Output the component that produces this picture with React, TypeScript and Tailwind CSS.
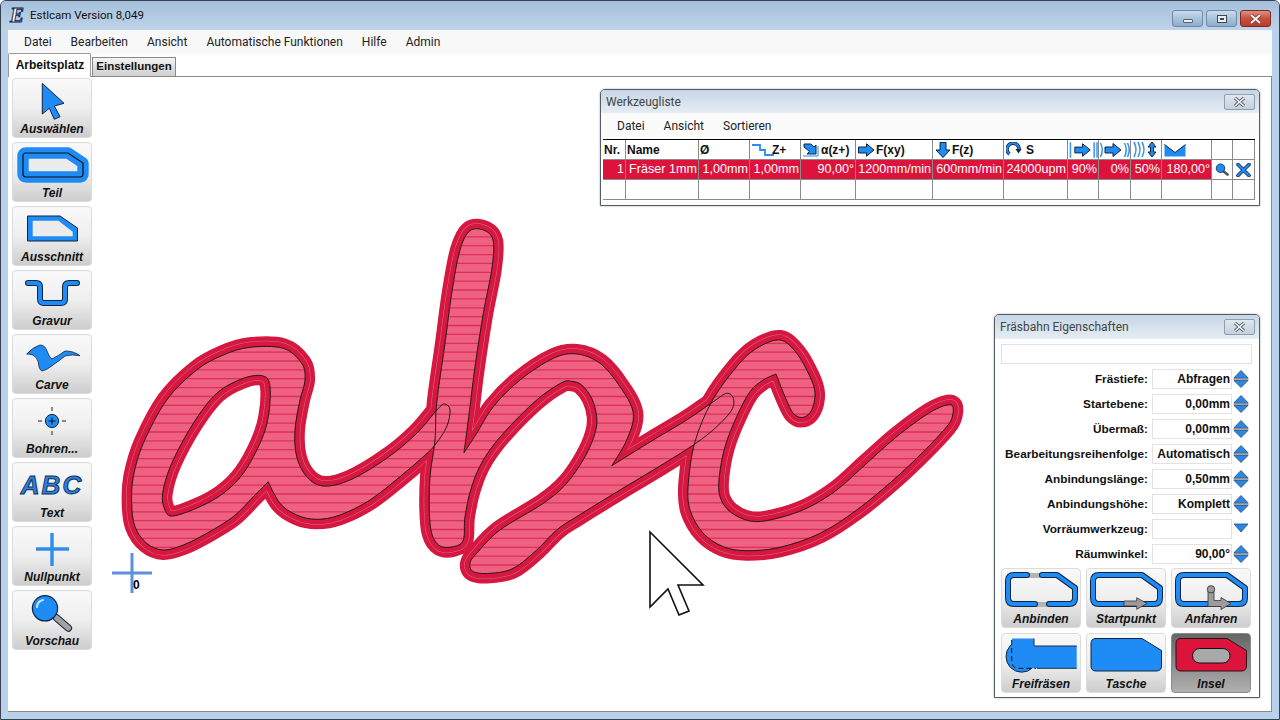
import React from "react";

const BLUE = "#1f8bf5";
const DARK = "#0f2540";

// outline tracing helper: points are read from zoomed crops (3x), third value marks a sharp corner
function trace(ox: number, oy: number, pts: number[][]) {
  const p = pts.map((q) => [ox + q[0] / 3, oy + q[1] / 3, q[2] || 0]);
  const n = p.length;
  let d = `M${p[0][0].toFixed(1)} ${p[0][1].toFixed(1)}`;
  for (let i = 0; i < n; i++) {
    const p0 = p[(i - 1 + n) % n];
    const p1 = p[i];
    const p2 = p[(i + 1) % n];
    const p3 = p[(i + 2) % n];
    const k1 = p1[2] ? 0 : 1 / 6;
    const k2 = p2[2] ? 0 : 1 / 6;
    const c1x = p1[0] + (p2[0] - p0[0]) * k1;
    const c1y = p1[1] + (p2[1] - p0[1]) * k1;
    const c2x = p2[0] - (p3[0] - p1[0]) * k2;
    const c2y = p2[1] - (p3[1] - p1[1]) * k2;
    d += `C${c1x.toFixed(1)} ${c1y.toFixed(1)} ${c2x.toFixed(1)} ${c2y.toFixed(1)} ${p2[0].toFixed(1)} ${p2[1].toFixed(1)}`;
  }
  return d + "Z";
}

const shapeA = trace(110, 330, [
  [420, 52], [520, 55], [575, 100], [585, 150], [570, 210], [555, 300], [560, 380], [590, 440], [640, 468], [720, 450],
  [830, 385], [920, 310], [985, 235], [1005, 222], [1020, 240], [1010, 290], [975, 345], [940, 380], [870, 440], [780, 510],
  [690, 555], [620, 568], [560, 555], [510, 520], [475, 455, 1], [430, 500], [370, 560], [290, 610], [220, 645], [160, 660],
  [110, 640], [75, 590], [65, 520], [70, 440], [100, 340], [170, 210], [260, 120], [340, 75],
]);
const holeA = trace(110, 330, [
  [460, 138], [400, 145], [320, 190], [250, 280], [185, 400], [158, 490], [165, 540], [190, 558], [270, 530], [340, 490],
  [400, 430], [450, 340], [475, 260], [480, 170],
]);
const shapeB = trace(420, 210, [
  [45, 690], [50, 580], [75, 400], [95, 250], [120, 120], [150, 62], [195, 62], [220, 95], [215, 180], [190, 310],
  [165, 470], [150, 590], [132, 728, 1], [170, 670], [220, 590], [300, 510], [400, 445], [470, 432], [540, 460], [600, 530],
  [640, 610], [620, 690], [575, 767, 1], [700, 690], [800, 630], [880, 575], [920, 550], [940, 565], [935, 600], [890, 650],
  [820, 705], [700, 780], [600, 840], [470, 920], [410, 960], [350, 1020], [280, 1075], [210, 1090], [160, 1085], [150, 1060],
  [170, 1030], [240, 960], [370, 880], [440, 820], [495, 740], [525, 670], [530, 620], [515, 565], [485, 525], [455, 514], [425, 518],
  [350, 570], [250, 670], [190, 750], [155, 830], [135, 920], [130, 990], [100, 1010], [60, 1008], [35, 970], [28, 900], [30, 800],
]);
const shapeC = trace(640, 320, [
  [420, 60], [470, 100], [510, 170], [525, 220], [515, 270], [490, 292], [460, 280], [435, 230], [408, 162, 1], [370, 180],
  [330, 215], [290, 290], [255, 380], [238, 470], [240, 530], [270, 575], [330, 603], [400, 598], [500, 565], [590, 510],
  [680, 430], [770, 350], [850, 290], [900, 262], [935, 255], [938, 285], [920, 320], [850, 395], [760, 480], [650, 570],
  [540, 640], [420, 682], [320, 692], [250, 680], [190, 640], [150, 570], [145, 490], [165, 365], [215, 245], [290, 140], [350, 85],
]);
const contour = shapeA + holeA + shapeB + shapeC;

let hatch = "";
for (let k = -16; k < 28; k++) {
  const y = 361 + k * 8.87;
  hatch += `M100 ${y.toFixed(1)}H1000`;
}

const Toolpath = () => (
  <svg className="absolute left-0 top-0 h-[634px] w-[1264px]" viewBox="8 77 1264 634" fill="none">
    <defs>
      <clipPath id="inside">
        <path d={contour} />
      </clipPath>
    </defs>
    <path d={contour} stroke="#d6173f" strokeWidth="20" strokeLinejoin="round" />
    <path d={contour} stroke="#d4708a" strokeWidth="11" strokeLinejoin="round" />
    <path d={contour} stroke="#d6173f" strokeWidth="10" strokeLinejoin="round" />
    <path d={contour} fill="#ee6181" />
    <path d={hatch} stroke="#dc3059" strokeWidth="1.3" clipPath="url(#inside)" />
    <path d={contour} stroke="#111" strokeWidth="0.9" />
    <path d="M650 532L703 585H678L689 611L679 615L668 589L650 607Z" fill="#fff" stroke="#111" strokeWidth="1.6" />
    <path d="M112 573H152M132 553V593" stroke="#5f8fdc" strokeWidth="3" />
  </svg>
);

const Band = ({ d }: { d: string }) => (
  <>
    <path d={d} fill="none" stroke={DARK} strokeWidth="6" strokeLinecap="round" strokeLinejoin="round" />
    <path d={d} fill="none" stroke={BLUE} strokeWidth="4" strokeLinecap="round" strokeLinejoin="round" />
  </>
);

const OUTLINE = "M13 7H56L74 20V30Q74 36 68 36H13Q7 36 7 30V13Q7 7 13 7Z";
const PLATE = "M10 5.5H56L75.5 17.5V33Q75.5 38 70 38H10Q5 38 5 33V10.5Q5 5.5 10 5.5Z";
const TEIL = "M14 11H56L71 21V32Q71 35 68 35H14Q11 35 11 32V14Q11 11 14 11Z";

const icons: Record<string, React.ReactNode> = {
  arrow: (
    <path d="M30.3 5.3L52 25.3L42.3 28L48 38.7L42.3 41.3L37.3 30.3L30.3 36Z" fill={BLUE} stroke={DARK} strokeWidth="1" strokeLinejoin="round" />
  ),
  teil: (
    <>
      <path d={TEIL} fill="#ececec" stroke={BLUE} strokeWidth="11.4" strokeLinejoin="round" />
      <path d={TEIL} fill="none" stroke="#111" strokeWidth="1.2" />
    </>
  ),
  ausschnitt: (
    <>
      <path d="M15.5 10H48L65.5 22V35H15.5Z" fill={BLUE} stroke={DARK} strokeWidth="1" />
      <path d="M20.7 14.7H46.5L60.7 25.7V30.3H20.7Z" fill="#ececec" />
    </>
  ),
  gravur: <Band d="M16 13H24Q28 13 28 17V29Q28 33 32 33H49Q53 33 53 29V17Q53 13 57 13H65" />,
  carve: (
    <path d="M14.7 20Q21 13 28 11Q33 11 35 17Q37 23 40 25Q46 22 53 17Q62 17 68 21.7Q60 20 53 22Q47 27 41 31Q35 36 30 37Q27 36 26.3 28Q25 23 21 21Q18 20 14.7 20Z" fill={BLUE} stroke={DARK} strokeWidth="0.8" />
  ),
  bohren: (
    <>
      <path d="M26 23H30M50 23H54M40 9V13M40 33V37" stroke="#222" strokeWidth="1" />
      <circle cx="40" cy="23" r="6.6" fill={BLUE} stroke={DARK} strokeWidth="1" />
      <path d="M36.5 23H43.5M40 19.5V26.5" stroke="#111" strokeWidth="1" />
    </>
  ),
  null: <path d="M40 7V40M24 23H57" stroke="#2f8de8" strokeWidth="3.4" />,
  vorschau: (
    <>
      <path d="M44.7 28L56.3 38" stroke={DARK} strokeWidth="7.5" strokeLinecap="round" />
      <path d="M44.7 28L56.3 38" stroke="#a2a2a2" strokeWidth="5.5" strokeLinecap="round" />
      <circle cx="33" cy="18.3" r="12.6" fill={BLUE} stroke={DARK} strokeWidth="1.2" />
      <path d="M25 17Q25.5 11 31 10" stroke="#cfe6ff" strokeWidth="2" fill="none" strokeLinecap="round" />
    </>
  ),
  anbinden: (
    <>
      <rect x="28" y="5" width="11" height="5" fill="#b4b4b4" />
      <rect x="35" y="34" width="11" height="5" fill="#b4b4b4" />
      <Band d="M26 7H13Q7 7 7 13V30Q7 36 13 36H34" />
      <Band d="M41 7H56L74 20V30Q74 36 68 36H48" />
    </>
  ),
  startpunkt: (
    <>
      <Band d={OUTLINE} />
      <path d="M38 33H50.7V29.7L61 35.5L50.7 41.3V38H38Z" fill="#9c9c9c" stroke="#333" strokeWidth="0.8" />
    </>
  ),
  anfahren: (
    <>
      <Band d={OUTLINE} />
      <path d="M37 22V38.5H50V41.5L60 35.5L50 29.5V32.5H43V22Z" fill="#9c9c9c" stroke="#333" strokeWidth="0.8" />
      <circle cx="40" cy="21.3" r="3.7" fill="#9c9c9c" stroke="#333" strokeWidth="0.8" />
    </>
  ),
  frei: (
    <>
      <circle cx="20.7" cy="23.5" r="15.7" fill={BLUE} stroke={DARK} strokeWidth="1" />
      <path d="M11 5.5H33V13H75.7V35.3H30V30H11Z" fill={BLUE} />
      <path d="M33 5.5V13H75.7M75.7 35.3H36" stroke="#16304f" strokeWidth="1" fill="none" />
      <path d="M10.7 7V28Q11 35 17 35.3H35" stroke="#111" strokeWidth="1" strokeDasharray="5 3" fill="none" />
    </>
  ),
  tasche: <path d={PLATE} fill={BLUE} stroke={DARK} strokeWidth="1" />,
  insel: (
    <>
      <path d={PLATE} fill="#dc143c" stroke="#2a1015" strokeWidth="1" />
      <rect x="21.5" y="15.5" width="37.5" height="14.5" rx="7.2" fill="#a9a9a9" stroke="#111" strokeWidth="1" />
    </>
  ),
};

const ToolButton = ({ label, icon, pressed, children }: { label: string; icon?: string; pressed?: boolean; children?: React.ReactNode }) => (
  <div
    className={
      pressed
        ? "flex h-[60px] w-20 flex-col items-center rounded-[4px] border border-[#8a8a8a] bg-linear-to-b from-[#666666] to-[#b0b0b0]"
        : "flex h-[60px] w-20 flex-col items-center rounded-[4px] border border-[#dcdcdc] bg-linear-to-b from-[#f9f9f9] via-[#efefef] to-[#cdcdcd]"
    }
  >
    {icon ? (
      <svg className="h-[43px] w-[78px] shrink-0 overflow-visible" viewBox="1 1 78 43">
        {icons[icon]}
      </svg>
    ) : (
      <div className="flex h-[43px] shrink-0 items-center">{children}</div>
    )}
    <span className="text-xs font-bold italic leading-[14px] text-[#111]">{label}</span>
  </div>
);

const Sidebar = () => (
  <div className="relative z-10 flex w-[84px] flex-col gap-1 pl-1 pt-px">
    <ToolButton label="Auswählen" icon="arrow" />
    <ToolButton label="Teil" icon="teil" />
    <ToolButton label="Ausschnitt" icon="ausschnitt" />
    <ToolButton label="Gravur" icon="gravur" />
    <ToolButton label="Carve" icon="carve" />
    <ToolButton label="Bohren..." icon="bohren" />
    <ToolButton label="Text">
      <span className="text-[26px] font-bold italic leading-none tracking-[2px] text-[#2a82e4] [-webkit-text-stroke:1px_#12305a]">ABC</span>
    </ToolButton>
    <ToolButton label="Nullpunkt" icon="null" />
    <ToolButton label="Vorschau" icon="vorschau" />
  </div>
);

const CloseButton = () => (
  <div className="flex h-[16px] w-[31px] items-center justify-center rounded-[2px] border border-[#8f9eae] bg-linear-to-b from-[#dfe7ef] to-[#c3d0dd]">
    <svg width="13" height="10" viewBox="0 0 13 10">
      <path d="M2 1L11 9M11 1L2 9" stroke="#4d5863" strokeWidth="3.2" />
      <path d="M2 1L11 9M11 1L2 9" stroke="#f4f6f8" strokeWidth="1.6" />
    </svg>
  </div>
);

const Arrow = () => (
  <svg width="17" height="14" viewBox="0 0 17 14" className="shrink-0">
    <path d="M0.5 4H8.5V0.8L16 7L8.5 13.2V10H0.5Z" fill={BLUE} stroke={DARK} strokeWidth="1" />
  </svg>
);

const Head = ({ children, className = "" }: { children: React.ReactNode; className?: string }) => (
  <div className={"flex h-5 items-center overflow-hidden border-b border-r border-[#8a8a8a] text-xs font-bold text-[#111] " + className}>{children}</div>
);

const Cell = ({ children, className = "" }: { children?: React.ReactNode; className?: string }) => (
  <div className={"flex h-5 items-center justify-end overflow-hidden whitespace-nowrap border-b border-r border-[#8a8a8a] bg-[#dc143c] pr-px text-[12.6px] text-white " + className}>{children}</div>
);

const ToolList = () => (
  <div className="absolute left-[592px] top-3 z-20 flex h-[117px] w-[660px] flex-col rounded-t-[5px] border border-[#555c63] bg-white shadow-[0_0_2px_#0006]">
    <div className="flex h-[23px] shrink-0 items-center justify-between rounded-t-[4px] bg-linear-to-b from-[#c6d6e6] to-[#e6edf3] pl-[5px] pr-[4px] font-['Roboto',sans-serif] text-xs text-[#444]">
      <span>Werkzeugliste</span>
      <CloseButton />
    </div>
    <div className="flex h-[26px] shrink-0 items-center gap-[19px] bg-[#fbfbfb] pl-4 font-['Roboto',sans-serif] text-xs text-[#222]">
      <span>Datei</span>
      <span>Ansicht</span>
      <span>Sortieren</span>
    </div>
    <div className="ml-0.5 grid w-[652px] grid-cols-[23px_73px_51px_51px_55px_77px_71px_64px_31px_32px_31px_50px_21px_22px] border-t border-black">
      <Head className="pl-px">Nr.</Head>
      <Head className="pl-px">Name</Head>
      <Head className="pl-px">Ø</Head>
      <Head className="gap-1 pl-0.5">
        <svg width="26" height="14" viewBox="0 0 26 14" className="shrink-0">
          <path d="M0 2H8V7H13V12H22" fill="none" stroke="#2f8de8" strokeWidth="1.8" />
        </svg>
        <span className="-ml-2.5">Z+</span>
      </Head>
      <Head className="gap-px pl-0.5">
        <svg width="17" height="14" viewBox="0 0 17 14" className="shrink-0">
          <path d="M1 1H8L11 4L13 2V11H4L6.5 8.5L1 4Z" fill={BLUE} stroke={DARK} strokeWidth="1" />
          <path d="M0 13H15V3" fill="none" stroke={BLUE} strokeWidth="1" />
        </svg>
        α(z+)
      </Head>
      <Head className="gap-px pl-0.5">
        <Arrow />
        F(xy)
      </Head>
      <Head className="gap-px pl-0.5">
        <svg width="16" height="16" viewBox="0 0 16 16" className="shrink-0">
          <path d="M5 0.5H11V8H15L8 15.5L1 8H5Z" fill={BLUE} stroke={DARK} strokeWidth="1" />
        </svg>
        F(z)
      </Head>
      <Head className="gap-1 pl-0.5">
        <svg width="16" height="15" viewBox="0 0 16 15" className="shrink-0">
          <path d="M3.5 12A6 6 0 1 1 13 8" fill="none" stroke={DARK} strokeWidth="3.6" />
          <path d="M3.5 12A6 6 0 1 1 13 8" fill="none" stroke={BLUE} strokeWidth="2" />
          <path d="M9.5 7H15.5L12.5 11.5Z" fill={DARK} />
        </svg>
        S
      </Head>
      <Head className="pl-px">
        <svg width="30" height="16" viewBox="0 0 30 16">
          <path d="M1.5 0V16M26 0V16M29 0V16" stroke="#3b97ee" strokeWidth="1.6" />
          <path d="M6 5H14V1.5L22 8L14 14.5V11H6Z" fill={BLUE} stroke={DARK} strokeWidth="1" />
        </svg>
      </Head>
      <Head>
        <svg width="31" height="16" viewBox="0 0 31 16">
          <path d="M1.5 1Q5 8 1.5 15M25.5 1Q29 8 25.5 15M28.5 1Q32 8 28.5 15" fill="none" stroke="#3b97ee" strokeWidth="1.6" />
          <path d="M6 5H14V1.5L22 8L14 14.5V11H6Z" fill={BLUE} stroke={DARK} strokeWidth="1" />
        </svg>
      </Head>
      <Head className="pl-0.5">
        <svg width="27" height="17" viewBox="0 0 27 17">
          <path d="M1 1Q5 8.5 1 16M5 1Q9 8.5 5 16M9 1Q13 8.5 9 16" fill="none" stroke="#3b97ee" strokeWidth="1.6" />
          <path d="M19 1L23 6H20.5V11H23L19 16L15 11H17.5V6H15Z" fill={BLUE} stroke={DARK} strokeWidth="1" />
        </svg>
      </Head>
      <Head className="pl-0.5">
        <svg width="22" height="14" viewBox="0 0 22 14">
          <path d="M0.5 1.5L11 9.5L21.5 1.5V13.5H0.5Z" fill={BLUE} />
          <path d="M0.5 1.5L11 9.5L21.5 1.5" fill="none" stroke={DARK} strokeWidth="1" />
        </svg>
      </Head>
      <Head>{null}</Head>
      <Head>{null}</Head>

      <Cell>1</Cell>
      <Cell className="justify-start pl-[3px]">Fräser 1mm</Cell>
      <Cell>1,00mm</Cell>
      <Cell>1,00mm</Cell>
      <Cell>90,00°</Cell>
      <Cell>1200mm/min</Cell>
      <Cell>600mm/min</Cell>
      <Cell>24000upm</Cell>
      <Cell className="pr-[3px]">90%</Cell>
      <Cell>0%</Cell>
      <Cell>50%</Cell>
      <Cell>180,00°</Cell>
      <div className="flex h-5 items-center justify-center border-b border-r border-[#8a8a8a]">
        <svg width="14" height="13" viewBox="0 0 14 13">
          <path d="M8 8L12.5 11.5" stroke="#555" strokeWidth="2.8" strokeLinecap="round" />
          <circle cx="5.5" cy="5.2" r="4.3" fill={BLUE} stroke={DARK} strokeWidth="0.8" />
        </svg>
      </div>
      <div className="flex h-5 items-center justify-center border-b border-r border-[#8a8a8a]">
        <svg width="15" height="14" viewBox="0 0 15 14">
          <path d="M2 1.5L13 12.5M13 1.5L2 12.5" stroke={DARK} strokeWidth="3.6" strokeLinecap="round" />
          <path d="M2 1.5L13 12.5M13 1.5L2 12.5" stroke={BLUE} strokeWidth="2.2" strokeLinecap="round" />
        </svg>
      </div>

      {Array.from({ length: 14 }).map((_, i) => (
        <div key={i} className="h-5 border-b border-r border-[#8a8a8a] bg-white" />
      ))}
    </div>
  </div>
);

const Spinner = ({ downOnly }: { downOnly?: boolean }) => (
  <svg width="16" height="20" viewBox="0 0 16 20" className="shrink-0">
    {downOnly ? (
      <path d="M1 5H15L8 13Z" fill="#2f86e0" stroke="#1c4f8a" strokeWidth="0.8" />
    ) : (
      <>
        <path d="M8 1.5L15 8.8H1Z" fill="#2f86e0" stroke="#1c4f8a" strokeWidth="0.8" />
        <path d="M0.5 10H15.5" stroke="#223" strokeWidth="0.8" />
        <path d="M1 11.5H15L8 18.5Z" fill="#2f86e0" stroke="#1c4f8a" strokeWidth="0.8" />
      </>
    )}
  </svg>
);

const Field = ({ label, value, downOnly }: { label: string; value: string; downOnly?: boolean }) => (
  <div className="flex h-5 items-center">
    <span className="w-[153px] whitespace-nowrap pt-px text-right text-[11.8px] font-bold text-[#111]">{label}</span>
    <div className="ml-1 flex h-5 w-20 items-center justify-end border border-[#e2e2e2] pr-px text-xs font-bold text-[#111]">{value}</div>
    <div className="ml-px">
      <Spinner downOnly={downOnly} />
    </div>
  </div>
);

const PathProps = () => (
  <div className="absolute left-[986px] top-[237px] z-20 flex h-[384px] w-[266px] flex-col rounded-t-[5px] border border-[#555c63] bg-white shadow-[0_0_2px_#0006]">
    <div className="flex h-6 shrink-0 items-center justify-between rounded-t-[4px] bg-linear-to-b from-[#c6d6e6] to-[#e6edf3] pl-[5px] pr-[4px] font-['Roboto',sans-serif] text-xs text-[#444]">
      <span>Fräsbahn Eigenschaften</span>
      <CloseButton />
    </div>
    <div className="ml-1.5 mt-[5px] h-5 w-[251px] shrink-0 border border-[#e2e2e2]" />
    <div className="mt-[5px] flex flex-col gap-[5px]">
      <Field label="Frästiefe:" value="Abfragen" />
      <Field label="Startebene:" value="0,00mm" />
      <Field label="Übermaß:" value="0,00mm" />
      <Field label="Bearbeitungsreihenfolge:" value="Automatisch" />
      <Field label="Anbindungslänge:" value="0,50mm" />
      <Field label="Anbindungshöhe:" value="Komplett" />
      <Field label="Vorräumwerkzeug:" value="" downOnly />
      <Field label="Räumwinkel:" value="90,00°" />
    </div>
    <div className="ml-1.5 mt-1 grid grid-cols-[80px_80px_80px] gap-[5px]">
      <ToolButton label="Anbinden" icon="anbinden" />
      <ToolButton label="Startpunkt" icon="startpunkt" />
      <ToolButton label="Anfahren" icon="anfahren" />
      <ToolButton label="Freifräsen" icon="frei" />
      <ToolButton label="Tasche" icon="tasche" />
      <ToolButton label="Insel" icon="insel" pressed />
    </div>
  </div>
);

const WindowControls = () => (
  <div className="flex items-start gap-[3px] pr-2 pt-[9px]">
    <div className="flex h-[17px] w-[31px] items-center justify-center rounded-[3px] border border-[#6f8aa6] bg-linear-to-b from-[#c9dbec] via-[#aac3dc] to-[#8dabc9]">
      <div className="mt-1 h-1 w-2.5 rounded-[1px] border border-[#56626e] bg-[#e9eef3]" />
    </div>
    <div className="flex h-[17px] w-[31px] items-center justify-center rounded-[3px] border border-[#6f8aa6] bg-linear-to-b from-[#c9dbec] via-[#aac3dc] to-[#8dabc9]">
      <div className="flex h-2 w-2.5 items-center justify-center border border-[#3d4955] bg-[#e9eef3]">
        <div className="h-0.5 w-1 bg-[#3d4955]" />
      </div>
    </div>
    <div className="flex h-[17px] w-[31px] items-center justify-center rounded-[3px] border border-[#7a2a22] bg-linear-to-b from-[#dd8f82] via-[#c5513f] to-[#c03a2a]">
      <svg width="13" height="10" viewBox="0 0 13 10">
        <path d="M2 1L11 9M11 1L2 9" stroke="#6b3a34" strokeWidth="3.4" />
        <path d="M2 1L11 9M11 1L2 9" stroke="#f7f2f0" strokeWidth="2" />
      </svg>
    </div>
  </div>
);

export default function App() {
  return (
    <div className="flex h-[720px] w-[1280px] flex-col overflow-hidden rounded-t-[6px] border border-[#39424c] bg-[#b9d1ea] px-[7px] pb-[7px] font-['Liberation_Sans',Arial,sans-serif]">
      <div className="-mx-[7px] flex h-[29px] shrink-0 justify-between bg-linear-to-b from-[#a5c0dc] to-[#bed3e9] pl-[9px]">
        <div className="flex items-center gap-1 font-['Roboto',sans-serif] text-[11.5px] text-[#111]">
          <span className="w-4 font-['Liberation_Serif',serif] text-[21px] font-bold italic leading-none text-white [-webkit-text-stroke:1px_#14264f]">E</span>
          <span>Estlcam Version 8,049</span>
        </div>
        <WindowControls />
      </div>
      <div className="flex h-6 shrink-0 items-center gap-[19px] bg-[#f8f8f9] pl-4 font-['Roboto',sans-serif] text-xs text-[#222]">
        <span>Datei</span>
        <span>Bearbeiten</span>
        <span>Ansicht</span>
        <span>Automatische Funktionen</span>
        <span>Hilfe</span>
        <span>Admin</span>
      </div>
      <div className="flex h-[23px] shrink-0 items-end border-b border-[#8a8a8a] bg-white">
        <div className="relative top-px flex h-6 w-[83px] items-start justify-center rounded-t-[2px] border border-b-0 border-[#9a9a9a] bg-white pl-px pt-[3px] text-xs font-bold text-[#111]">
          Arbeitsplatz
        </div>
        <div className="ml-px flex h-[19px] w-[84px] items-center justify-center border border-b-0 border-[#8a8a8a] bg-linear-to-b from-[#f4f4f4] to-[#cfcfcf] text-[11.5px] font-bold text-[#111]">
          Einstellungen
        </div>
      </div>
      <div className="relative flex min-h-0 flex-1 border-b border-r border-[#8a8a8a] bg-white">
        <Sidebar />
        <Toolpath />
        <span className="absolute left-[125px] top-[501px] text-xs font-bold leading-[14px] text-black">0</span>
        <ToolList />
        <PathProps />
      </div>
    </div>
  );
}
